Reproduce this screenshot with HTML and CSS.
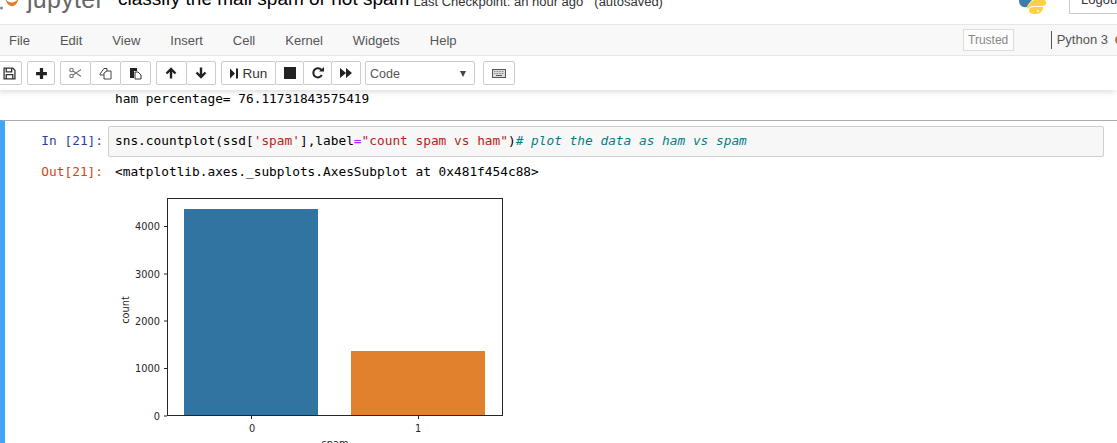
FILE: index.html
```html
<!DOCTYPE html>
<html lang="en">
<head>
<meta charset="utf-8">
<title>classify the mail spam or not spam</title>
<link rel="stylesheet" href="styles.css">
</head>
<body>
<header class="head">
  <svg class="jlogo" width="24" height="12" viewBox="0 0 24 12"><circle cx="1.500" cy="10" r="1.500" fill="#888"/><path d="M5 0C8 6 15 6 19 0C16 11 8 11 5 0Z" fill="#e5792d"/></svg>
  <span class="jname">jupyter</span>
  <span class="nbname">classify the mail spam or not spam</span>
  <span class="ckpt">Last Checkpoint: an hour ago</span>
  <span class="saved">(autosaved)</span>
  <span class="grow"></span>
  <svg class="pylogo" width="28" height="14" viewBox="0 0 28 14"><path d="M0 0H13C11 2 9 4 8 7C3 8 0 5 0 0Z" fill="#3d7bad"/><path d="M15 0H26C28 3 27 6 23 6H15C12 6 10 7 9 9L8 8C10 3 12 1 15 0Z" fill="#fed142"/><path d="M10 9C12 7 14 7 16 7H24C24 11 22 14 16 14C12 14 10 13 10 9Z" fill="#fed142"/><circle cx="19" cy="11" r="1" fill="#fff"/></svg>
  <span class="logout">Logout</span>
</header>
<nav class="menu">
  <span class="mi">File</span><span class="mi">Edit</span><span class="mi">View</span><span class="mi">Insert</span><span class="mi">Cell</span><span class="mi">Kernel</span><span class="mi">Widgets</span><span class="mi">Help</span>
  <span class="grow"></span>
  <span class="trusted">Trusted</span>
  <span class="kernel">Python 3</span>
  <span class="kdot"></span>
</nav>
<div class="tools">
  <div class="grp"><button class="btn w-save"><svg width="13" height="13" viewBox="0 0 12 12"><path d="M1 1H9L11 3V11H1Z M3 1.500V4.500H8V1.500 M3 11V7H9V11" fill="none" stroke="#333" stroke-width="1.200"/></svg></button></div>
  <div class="grp"><button class="btn w-plus"><svg width="13" height="13" viewBox="0 0 12 12"><path d="M6 1V11M1 6H11" stroke="#222" stroke-width="3"/></svg></button></div>
  <div class="grp">
    <button class="btn w-edit"><svg width="13" height="12" viewBox="0 0 13 12"><g fill="none" stroke="#777" stroke-width="1.100"><circle cx="2.500" cy="3" r="1.700"/><circle cx="2.500" cy="9" r="1.700"/><path d="M4 4L12 9.500M4 8L12 2.500"/></g></svg></button>
    <button class="btn w-edit"><svg width="13" height="13" viewBox="0 0 13 13"><g fill="#fff" stroke="#444" stroke-width="1"><path d="M1 7L5 1.500H8V8H1Z"/><path d="M5 6L8 4H12V12H5Z"/></g></svg></button>
    <button class="btn w-edit"><svg width="13" height="13" viewBox="0 0 13 13"><path d="M1 1H8V4H5V11H1Z" fill="#222"/><path d="M6 5H9L12 8V12H6Z" fill="#fff" stroke="#333"/></svg></button>
  </div>
  <div class="grp">
    <button class="btn w-move"><svg width="12" height="12" viewBox="0 0 12 12"><path d="M6 11.500V2M1.500 6.500L6 2L10.500 6.500" fill="none" stroke="#222" stroke-width="2.400"/></svg></button>
    <button class="btn w-move"><svg width="12" height="12" viewBox="0 0 12 12"><path d="M6 .5V10M1.500 5.500L6 10L10.500 5.500" fill="none" stroke="#222" stroke-width="2.400"/></svg></button>
  </div>
  <div class="grp">
    <button class="btn w-run"><svg width="8" height="11" viewBox="0 0 8 10"><path d="M0 0L5 5L0 10Z M6 0H8V10H6Z" fill="#222"/></svg><span class="runlabel">Run</span></button>
    <button class="btn w-stop"><svg width="12" height="12" viewBox="0 0 11 11"><rect width="11" height="11" fill="#222"/></svg></button>
    <button class="btn w-stop"><svg width="12" height="12" viewBox="0 0 12 12"><path d="M9.800 8A4.500 4.500 0 1 1 9.300 3" fill="none" stroke="#222" stroke-width="2"/><path d="M7 4.500H12V0Z" fill="#222"/></svg></button>
    <button class="btn w-ff"><svg width="13" height="10" viewBox="0 0 13 10"><path d="M0 0L6 5L0 10Z M6 0L12 5L6 10Z" fill="#222"/></svg></button>
  </div>
  <div class="select"><span>Code</span><svg width="6" height="6" viewBox="0 0 6 6"><path d="M0 0H6L3 6Z" fill="#444"/></svg></div>
  <button class="btn w-keys"><svg width="14" height="9" viewBox="0 0 14 9"><rect x=".5" y=".5" width="13" height="8" fill="#ddd" stroke="#555"/><path d="M2 2.500H12M2 4.500H12" stroke="#888" stroke-dasharray="1 .6"/><path d="M4 6.500H10" stroke="#555"/></svg></button>
</div>
<main class="page">
  <pre class="prior">ham percentage= 76.11731843575419</pre>
  <section class="cell">
    <div class="row inrow">
      <div class="prompt in">In [21]:</div>
      <div class="editor"><code class="src">sns.countplot(ssd[<span class="str">'spam'</span>],label<span class="op">=</span><span class="str">"count spam vs ham"</span>)<span class="cm"># plot the data as ham vs spam</span></code></div>
    </div>
    <div class="row outrow">
      <div class="prompt out">Out[21]:</div>
      <pre class="result">&lt;matplotlib.axes._subplots.AxesSubplot at 0x481f454c88&gt;</pre>
    </div>
    <div class="plot">
      <svg width="410" height="270" viewBox="0 0 410 270" class="chart">
        <rect x="84" y="19" width="134" height="207" fill="#3274a1"/>
        <rect x="251" y="161" width="134" height="65" fill="#e1812c"/>
        <rect x="67.500" y="8.500" width="335" height="217" fill="none" stroke="#262626"/>
        <g stroke="#262626">
          <path d="M64 226H67M64 178.500H67M64 131H67M64 84H67M64 36.500H67"/>
          <path d="M151.500 226V229M318.500 226V229"/>
        </g>
        <g class="ticks">
          <text x="60" y="229.500" text-anchor="end">0</text>
          <text x="60" y="182" text-anchor="end">1000</text>
          <text x="60" y="134.500" text-anchor="end">2000</text>
          <text x="60" y="87.500" text-anchor="end">3000</text>
          <text x="60" y="40" text-anchor="end">4000</text>
          <text x="152" y="242" text-anchor="middle">0</text>
          <text x="318" y="242" text-anchor="middle">1</text>
        </g>
        <text class="axlabel" x="235" y="257" text-anchor="middle">spam</text>
        <text class="axlabel" transform="translate(29 120) rotate(-90)" text-anchor="middle">count</text>
      </svg>
    </div>
  </section>
</main>
</body>
</html>
```
FILE: styles.css
```css
html, body { margin: 0; padding: 0; }
body { width: 1117px; height: 443px; overflow: hidden; background: #fff; font-family: "Liberation Sans", Arial, sans-serif; color: #333; display: flex; flex-direction: column; }
.grow { flex: 1; }
button { font: inherit; color: inherit; }
.head { height: 24px; flex: none; display: flex; align-items: flex-end; overflow: hidden; }
.jlogo { flex: none; margin: 0 0 14px 0; }
.jname { font-size: 25px; line-height: 24px; color: #666; margin: 0 0 13px 3px; width: 91px; flex: none; letter-spacing: .3px; }
.nbname { font-size: 19px; line-height: 22px; color: #000; margin-bottom: 14px; flex: none; }
.ckpt { font-size: 13px; line-height: 14px; color: #333; margin: 0 0 15px 4px; flex: none; }
.saved { font-size: 13px; line-height: 14px; color: #333; margin: 0 0 15px 11px; flex: none; }
.pylogo { flex: none; margin: 0 22px 10px 0; }
.logout { flex: none; width: 48px; height: 30px; margin-bottom: 10px; border: 1px solid #ccc; border-right: 0; box-sizing: border-box; font-size: 13px; line-height: 30px; padding-left: 11px; color: #333; }
.menu { height: 32px; flex: none; box-sizing: border-box; background: #f8f8f8; border-top: 1px solid #e7e7e7; border-bottom: 1px solid #e7e7e7; display: flex; align-items: center; padding-left: 9px; font-size: 13px; color: #555; }
.mi { margin-right: 30px; }
.trusted { width: 51px; height: 22px; box-sizing: border-box; border: 1px solid #ddd; background: #fcfcfc; color: #888; font-size: 12px; text-align: center; line-height: 20px; margin-right: 37px; }
.kernel { border-left: 1px solid #555; height: 18px; line-height: 18px; padding-left: 5px; color: #555; margin-right: 7px; }
.kdot { width: 6px; height: 8px; border-radius: 4px 0 0 4px; border: 2px solid #b8763c; border-right: 0; box-sizing: border-box; margin-right: -4px; }
.tools { height: 34px; flex: none; box-sizing: border-box; display: flex; align-items: flex-start; padding: 5px 0 0 0; gap: 5px; margin-left: -4px; background: #fff; box-shadow: 0 4px 6px -2px rgba(0,0,0,.14); position: relative; z-index: 1; width: 1121px; }
.grp { display: flex; }
.btn { height: 24px; box-sizing: border-box; background: #fff; border: 1px solid #ccc; border-radius: 2px; padding: 0; display: flex; align-items: center; justify-content: center; }
.grp .btn + .btn { margin-left: -1px; }
.w-save { width: 26px; }
.w-plus { width: 28px; }
.w-edit { width: 31px; }
.w-move { width: 30.500px; }
.w-run { width: 55px; gap: 5px; }
.runlabel { font-size: 13.500px; color: #333; }
.w-stop { width: 29px; }
.w-ff { width: 30px; }
.w-keys { width: 32px; margin-left: 3px; }
.select { width: 110px; height: 24px; margin-left: -1px; box-sizing: border-box; border: 1px solid #ccc; border-radius: 2px; display: flex; align-items: center; justify-content: space-between; padding: 2px 8px 0 4px; font-size: 12.500px; color: #555; }
.page { flex: 1; min-height: 0; overflow: hidden; }
pre, code { margin: 0; font-family: "DejaVu Sans Mono", monospace; font-size: 12.800px; line-height: 17px; }
.prior { padding: 0 0 0 115px; color: #000; height: 30px; }
.cell { box-sizing: border-box; border-top: 1px solid #ababab; border-left: 5px solid #42a5f5; height: 360px; padding-top: 5px; }
.row { display: flex; }
.prompt { width: 98px; flex: none; text-align: right; font-family: "DejaVu Sans Mono", monospace; font-size: 12.800px; line-height: 17px; padding-top: 6px; box-sizing: border-box; }
.in { color: #303f9f; }
.out { color: #d84315; padding-top: 0; }
.editor { flex: none; width: 996px; margin-left: 5px; height: 31px; box-sizing: border-box; border: 1px solid #cfcfcf; border-radius: 2px; background: #f7f7f7; padding: 4px 0 0 6px; }
.src { color: #000; }
.str { color: #ba2121; }
.op { color: #a2f; }
.cm { color: #008080; font-style: italic; }
.outrow { margin-top: 6px; }
.result { padding-left: 12px; color: #000; }
.plot { margin: 10px 0 0 95px; }
.chart { display: block; }
.ticks, .axlabel { font-family: "DejaVu Sans", sans-serif; font-size: 9.800px; fill: #262626; }
```
